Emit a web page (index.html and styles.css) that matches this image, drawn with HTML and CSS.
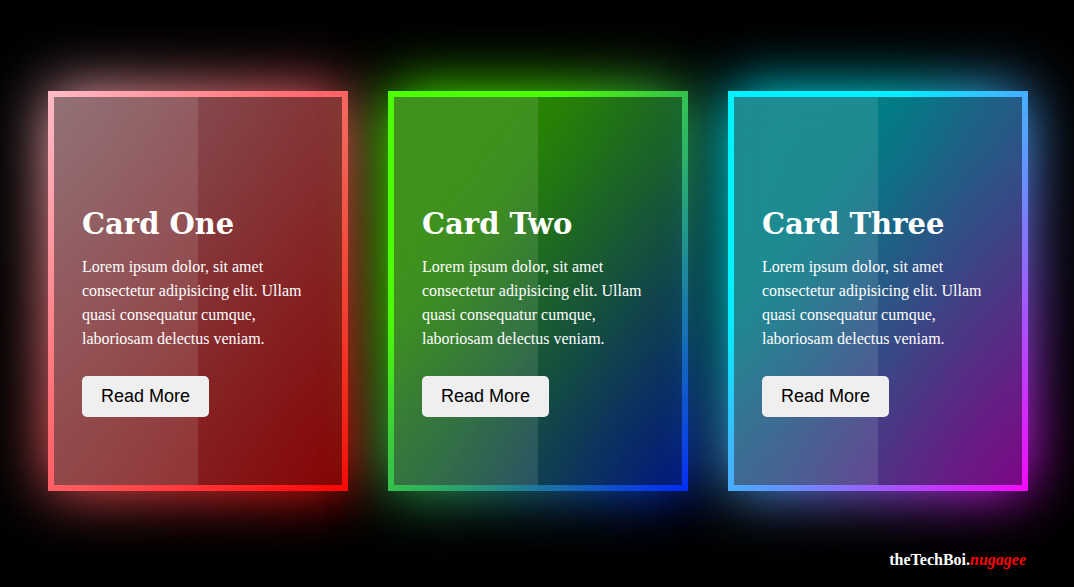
FILE: index.html
```html
<!DOCTYPE html>
<html lang="en">
<head>
<meta charset="utf-8">
<title>Glowing Cards</title>
<link rel="stylesheet" href="styles.css">
</head>
<body>
<main class="cards">
  <article class="card card-red">
    <div class="content">
      <h2>Card One</h2>
      <p>Lorem ipsum dolor, sit amet consectetur adipisicing elit. Ullam quasi consequatur cumque, laboriosam delectus veniam.</p>
      <button type="button">Read More</button>
    </div>
  </article>
  <article class="card card-green">
    <div class="content">
      <h2>Card Two</h2>
      <p>Lorem ipsum dolor, sit amet consectetur adipisicing elit. Ullam quasi consequatur cumque, laboriosam delectus veniam.</p>
      <button type="button">Read More</button>
    </div>
  </article>
  <article class="card card-cyan">
    <div class="content">
      <h2>Card Three</h2>
      <p>Lorem ipsum dolor, sit amet consectetur adipisicing elit. Ullam quasi consequatur cumque, laboriosam delectus veniam.</p>
      <button type="button">Read More</button>
    </div>
  </article>
</main>
<footer class="credit">theTechBoi.<em>nugagee</em></footer>
</body>
</html>
```
FILE: styles.css
```css
* {
  box-sizing: border-box;
}

body {
  margin: 0;
  min-height: 100vh;
  display: flex;
  flex-direction: column;
  background: #000;
  color: #fff;
  font-family: "Liberation Serif", "Times New Roman", serif;
}

.cards {
  flex: 1;
  display: flex;
  flex-wrap: wrap;
  justify-content: center;
  align-items: center;
  gap: 40px;
  padding: 50px 20px 20px 22px;
}

.card {
  position: relative;
  isolation: isolate;
  display: flex;
  align-items: center;
  width: 300px;
  min-height: 400px;
  padding: 6px;
  background: var(--glow);
}

/* Blurred copy of the card's gradient */
.card::before {
  content: "";
  position: absolute;
  inset: 0;
  z-index: -2;
  background: var(--glow);
  filter: blur(30px);
}

/* Dark face with a light sheen over its left half */
.card::after {
  content: "";
  position: absolute;
  inset: 6px;
  z-index: -1;
  background:
    linear-gradient(rgba(255, 255, 255, 0.11), rgba(255, 255, 255, 0.11)) left / 50% 100% no-repeat,
    rgba(0, 0, 0, 0.48);
}

.card-red {
  --glow: linear-gradient(to bottom right, pink, #f00);
}

.card-green {
  --glow: linear-gradient(to bottom right, #4dff03 30%, #02f);
}

.card-cyan {
  --glow: linear-gradient(to bottom right, #00f2ff 30%, #f0f);
}

.content {
  padding: 68px 28px 28px;
}

h2 {
  margin: 0 0 11px;
  font-family: Georgia, "DejaVu Serif", serif;
  font-size: 29px;
  line-height: 40px;
}

p {
  margin: 0 0 25px;
  font-size: 16px;
  line-height: 24px;
}

button {
  padding: 10px 19px;
  border: 0;
  border-radius: 5px;
  background: #efefef;
  color: #000;
  font-family: "Liberation Sans", Arial, sans-serif;
  font-size: 18px;
  line-height: 21px;
}

.credit {
  padding: 0 48px 18px;
  text-align: right;
  font-size: 16px;
  line-height: 18px;
  font-weight: bold;
}

.credit em {
  color: #f00;
}
```
